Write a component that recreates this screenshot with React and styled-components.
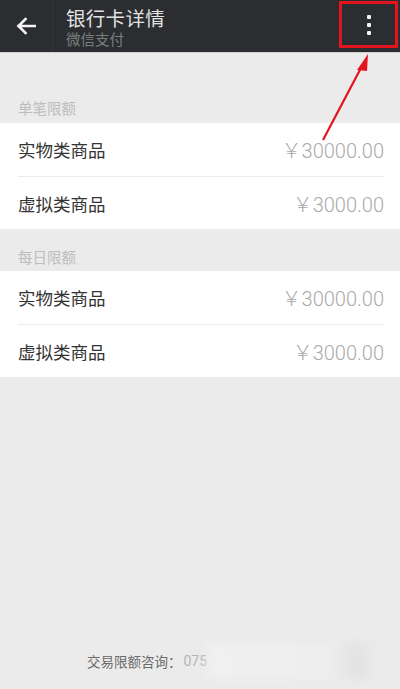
import React from "react";
import styled, { createGlobalStyle } from "styled-components";

const Global = createGlobalStyle`
  html, body { margin: 0; padding: 0; background: #ebebeb; }
  body { font-family: "Noto Sans CJK SC", "Noto Sans", sans-serif; }
  * { box-sizing: border-box; }
`;

const Page = styled.div`
  position: relative;
  width: 400px;
  height: 689px;
  display: flex;
  flex-direction: column;
  background: #ebebeb;
  overflow: hidden;
`;

const Header = styled.header`
  height: 53px;
  background: #2b2d30;
  display: flex;
  align-items: center;
  border-bottom: 1px solid #d2d2d2;
  flex-shrink: 0;
`;

const BackBtn = styled.div`
  width: 53px;
  height: 52px;
  display: flex;
  align-items: center;
  justify-content: center;
  border-right: 1px solid #34363a;
  margin-right: 13px;
`;

const TitleBlock = styled.div`
  flex: 1;
  height: 52px;
  display: flex;
  flex-direction: column;
  justify-content: flex-start;
  padding-top: 7px;
  font-family: "Liberation Sans", "Noto Sans CJK SC", sans-serif;
`;

const Title = styled.div`
  color: #e2e2e2;
  font-size: 19.5px;
  line-height: 24px;
  height: 24px;
  letter-spacing: 0.3px;
`;

const Subtitle = styled.div`
  color: #7c7e80;
  font-size: 14.5px;
  line-height: 18px;
  height: 18px;
`;

const MenuBox = styled.div`
  width: 59px;
  height: 47px;
  margin-right: 2px;
  margin-top: -3px;
  border: 3px solid #e3141d;
  display: flex;
  flex-direction: column;
  align-items: center;
  justify-content: center;
  gap: 4px;
`;

const Dot = styled.span`
  width: 4px;
  height: 4px;
  background: #f2f2f2;
  border-radius: 1px;
`;

const SectionLabel = styled.div`
  padding: ${(p) => p.$top}px 18px 0 18px;
  height: ${(p) => p.$h}px;
  font-size: 14.5px;
  line-height: 20px;
  color: #bdbdbd;
`;

const Card = styled.div`
  background: #fff;
  display: flex;
  flex-direction: column;
`;

const Row = styled.div`
  height: 53px;
  margin: 0 16px 0 18px;
  display: flex;
  align-items: center;
  justify-content: space-between;
  border-top: ${(p) => (p.$first ? "none" : "1px solid #ececec")};
`;

const RowLabel = styled.span`
  font-size: 17.5px;
  color: #333;
`;

const RowValue = styled.span`
  font-family: "Roboto", "Noto Sans CJK SC", sans-serif;
  font-weight: 300;
  font-size: 20px;
  color: #aaaaaa;
`;

const Footer = styled.div`
  margin-top: auto;
  height: 52px;
  display: flex;
  align-items: center;
  padding-left: 87px;
  padding-bottom: 4px;
  font-size: 13.5px;
`;

const FooterLabel = styled.span`
  color: #6a6a6a;
`;

const FooterNum = styled.span`
  font-family: "Roboto", sans-serif;
  color: #b5b5b5;
  font-size: 14px;
  margin-left: 2px;
`;

const Blur = styled.span`
  display: inline-block;
  width: 175px;
  height: 36px;
  background: linear-gradient(90deg, #f0f0f0 0%, #eeeeee 70%, #e2e2e2 85%, #ececec 100%);
  filter: blur(4px);
`;

const Annotation = styled.svg`
  position: absolute;
  left: 0;
  top: 0;
  pointer-events: none;
`;

const rows = [
  ["实物类商品", "￥30000.00"],
  ["虚拟类商品", "￥3000.00"],
];

function Section({ label, top, h }) {
  return (
    <>
      <SectionLabel $top={top} $h={h}>{label}</SectionLabel>
      <Card>
        {rows.map((r, i) => (
          <Row key={i} $first={i === 0}>
            <RowLabel>{r[0]}</RowLabel>
            <RowValue>{r[1]}</RowValue>
          </Row>
        ))}
      </Card>
    </>
  );
}

export default function App() {
  return (
    <Page>
      <Global />
      <Header>
        <BackBtn>
          <svg width="20" height="18" viewBox="0 0 20 18">
            <path d="M19 9H2.5M9.5 2L2.5 9l7 7" stroke="#f4f4f4" strokeWidth="2.6" fill="none" strokeLinecap="square" />
          </svg>
        </BackBtn>
        <TitleBlock>
          <Title>银行卡详情</Title>
          <Subtitle>微信支付</Subtitle>
        </TitleBlock>
        <MenuBox>
          <Dot />
          <Dot />
          <Dot />
        </MenuBox>
      </Header>
      <Section label="单笔限额" top={45} h={70} />
      <Section label="每日限额" top={18} h={42} />
      <Footer>
        <FooterLabel>交易限额咨询：</FooterLabel>
        <FooterNum>075</FooterNum>
        <Blur />
      </Footer>
      <Annotation width="400" height="689" viewBox="0 0 400 689">
        <line x1="323" y1="140" x2="362" y2="66" stroke="#e3141d" strokeWidth="2.2" />
        <polygon points="368,54 357,70 367,71" fill="#e3141d" />
      </Annotation>
    </Page>
  );
}
